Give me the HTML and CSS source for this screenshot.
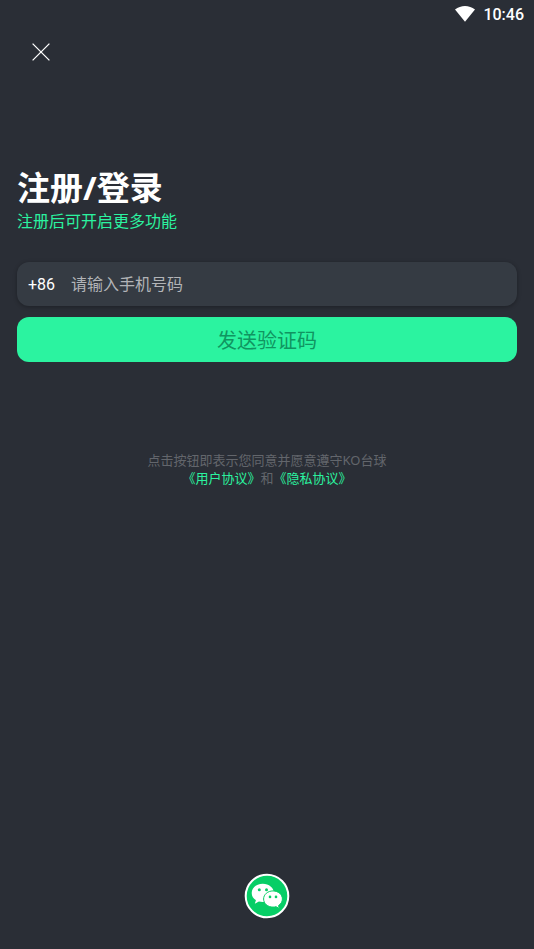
FILE: index.html
```html
<!DOCTYPE html>
<html lang="zh-CN">
<head>
<meta charset="utf-8">
<meta name="viewport" content="width=device-width, initial-scale=1">
<title>注册/登录</title>
<link rel="stylesheet" href="styles.css">
</head>
<body>
<div class="status-bar">
  <svg class="wifi" viewBox="0 0 20 16" aria-hidden="true"><path d="M0 3.6C5.8-1.2 14.2-1.2 20 3.6L10 15.8z"/></svg>
  <time>10:46</time>
</div>
<main class="page">
  <button class="close" type="button" aria-label="关闭">
    <svg viewBox="0 0 18 18" aria-hidden="true"><path d="M.6.6l16.8 16.8M17.4.6L.6 17.4"/></svg>
  </button>
  <h1 class="title">注册/登录</h1>
  <p class="subtitle">注册后可开启更多功能</p>
  <form class="login">
    <div class="field">
      <label for="phone">+86</label>
      <input id="phone" type="tel" placeholder="请输入手机号码">
    </div>
    <button class="submit" type="button">发送验证码</button>
  </form>
  <p class="terms">点击按钮即表示您同意并愿意遵守KO台球<br><a href="#terms">《用户协议》</a>和<a href="#privacy">《隐私协议》</a></p>
  <button class="wechat" type="button" aria-label="微信登录">
    <svg viewBox="0 0 46 46" aria-hidden="true">
      <circle class="disc" cx="23" cy="23" r="21.3"/>
      <path class="bubble" d="M18.8 10.700c-6.200 0-11.100 4.100-11.100 9.200 0 3 1.600 5.600 4.200 7.300l-1.100 3.500 4.100-2.100c1.200.3 2.500.5 3.900.5 6.200 0 11.100-4.100 11.100-9.200s-4.900-9.200-11.100-9.200z"/>
      <path class="bubble front" d="M29 17.900c-5.200 0-9.400 3.600-9.400 8.100s4.200 8.100 9.400 8.100c1 0 2-.1 3-.4l3.400 1.900-.9-3c2.300-1.500 3.900-3.900 3.900-6.600 0-4.500-4.200-8.100-9.400-8.100z"/>
      <g class="eyes"><circle cx="15.300" cy="16.800" r="1.500"/><circle cx="22.500" cy="16.800" r="1.500"/><circle cx="26" cy="23.900" r="1.300"/><circle cx="32" cy="23.900" r="1.300"/></g>
    </svg>
  </button>
</main>
</body>
</html>
```
FILE: styles.css
```css
* {
  box-sizing: border-box;
}

body {
  display: flex;
  flex-direction: column;
  min-height: 100vh;
  margin: 0;
  background: #2a2e36;
  color: #fff;
  font-family: Roboto, "Noto Sans CJK SC", sans-serif;
}

button {
  padding: 0;
  border: 0;
  background: none;
  font-family: inherit;
  cursor: pointer;
}

svg {
  display: block;
}

.status-bar {
  display: flex;
  align-items: center;
  justify-content: flex-end;
  gap: 8px;
  height: 28px;
  padding: 0 10px;
  font-size: 16px;
  font-weight: 500;
}

.wifi {
  width: 20px;
  height: 16px;
  fill: #fff;
}

.page {
  flex: 1;
  display: flex;
  flex-direction: column;
  padding: 0 17px 30px;
}

.close {
  display: grid;
  place-items: center;
  width: 48px;
  height: 47px;
}

.close svg {
  width: 18px;
  height: 18px;
  fill: none;
  stroke: #fff;
  stroke-width: 1.3;
}

.title {
  margin: 89px 0 0;
  font-family: "Noto Sans", "Noto Sans CJK SC", sans-serif;
  font-size: 33px;
  line-height: 48px;
  font-weight: 700;
}

.subtitle {
  margin: 0;
  color: #2bf3a0;
  font-size: 16px;
  line-height: 20px;
}

.login {
  display: flex;
  flex-direction: column;
  gap: 11px;
  margin-top: 30px;
}

.field {
  display: flex;
  align-items: center;
  gap: 16px;
  height: 44px;
  padding: 0 11px;
  border-radius: 12px;
  background: #353b43;
  box-shadow: 0 1px 4px rgba(0, 0, 0, 0.3);
  font-size: 16px;
}

.field input {
  flex: 1;
  min-width: 0;
  padding: 0;
  border: 0;
  outline: 0;
  background: none;
  color: #fff;
  font: inherit;
}

.field input::placeholder {
  color: #b2b4b7;
}

.submit {
  height: 45px;
  border-radius: 12px;
  background: #2bf3a0;
  color: #109561;
  font-size: 20px;
}

.terms {
  margin: 89px 0 32px;
  color: #63666c;
  font-family: "Noto Sans", "Noto Sans CJK SC", sans-serif;
  font-size: 13px;
  line-height: 18px;
  text-align: center;
}

.terms a {
  color: #2bf3a0;
  text-decoration: none;
}

.wechat {
  align-self: center;
  width: 46px;
  height: 46px;
  margin-top: auto;
}

.disc {
  fill: #07ce66;
  stroke: #fff;
  stroke-width: 2;
}

.bubble {
  fill: #fff;
}

.front {
  stroke: #07ce66;
  stroke-width: 1;
}

.eyes {
  fill: #07ce66;
}
```
